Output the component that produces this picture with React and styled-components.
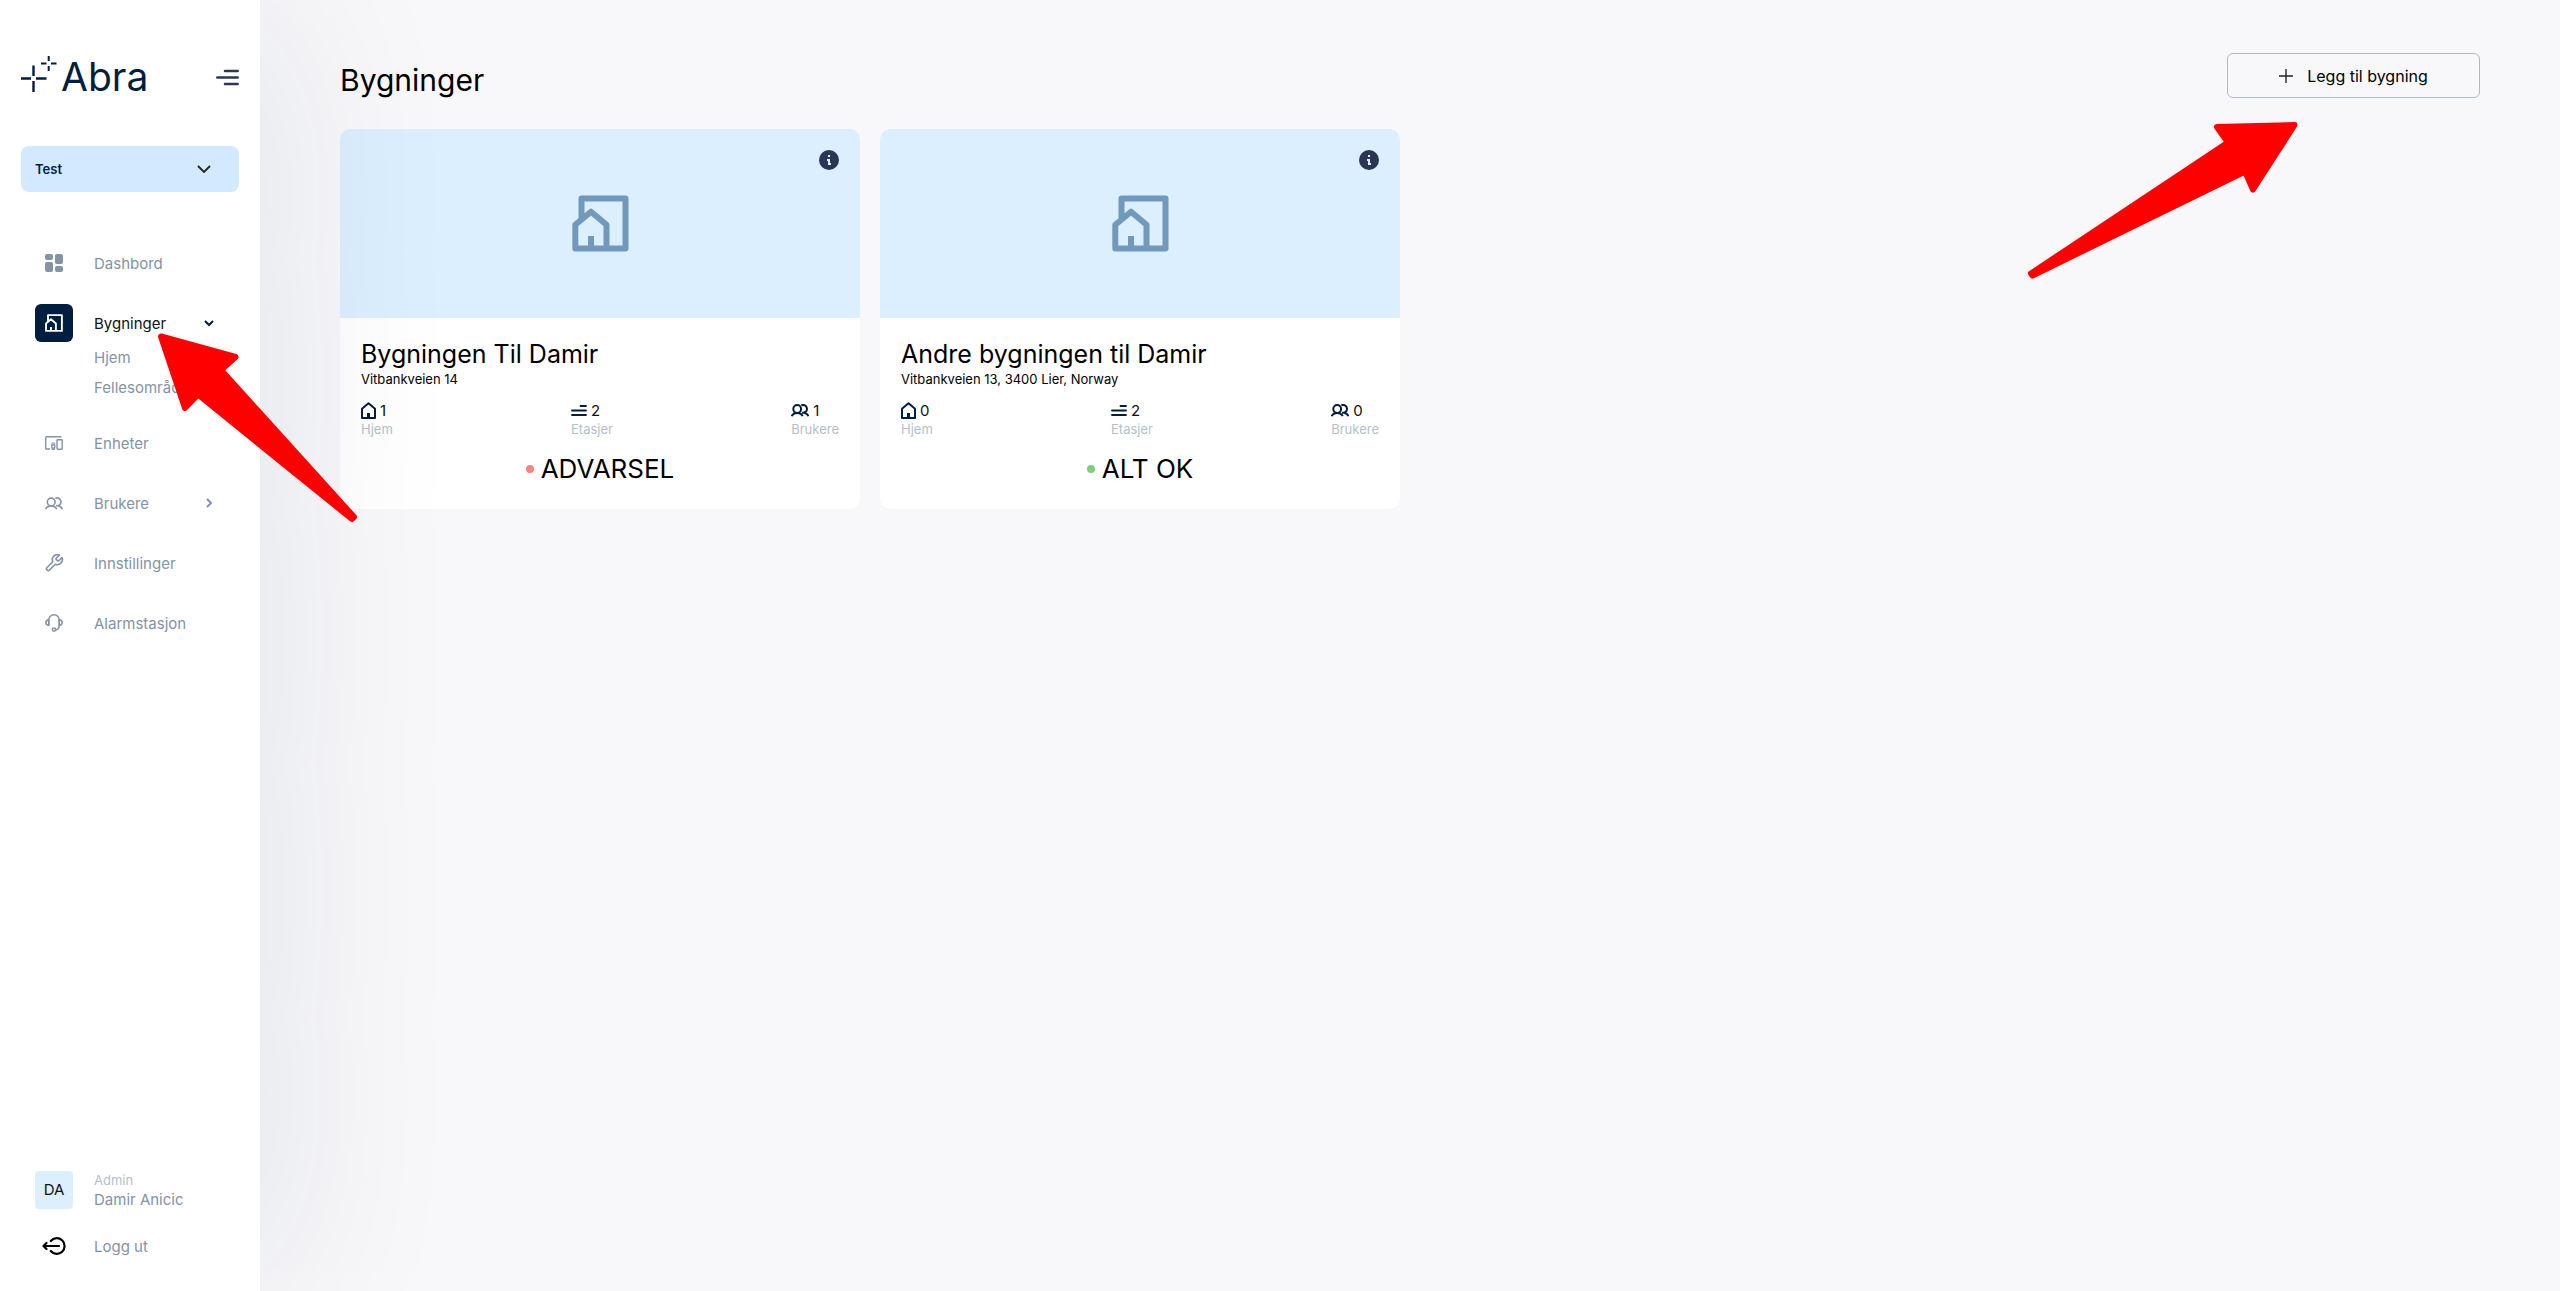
import React from 'react'
import styled, { createGlobalStyle } from 'styled-components'

const GlobalStyle = createGlobalStyle`
	* {
		box-sizing: border-box;
		margin: 0;
		padding: 0;
	}
	body {
		font-family: Inter, 'Liberation Sans', sans-serif;
		background-color: #f8f8fb;
		color: #000;
	}
	ul {
		list-style: none;
	}
	a {
		color: inherit;
		text-decoration: none;
	}
	button,
	select {
		font-family: inherit;
		cursor: pointer;
	}
	svg {
		display: block;
		flex-shrink: 0;
	}
`

const Page = styled.div`
	position: relative;
	display: flex;
	min-height: 100vh;
	overflow: hidden;
`

const Sidebar = styled.aside`
	position: relative;
	z-index: 1;
	display: flex;
	flex-direction: column;
	width: 260px;
	flex-shrink: 0;
	padding: 53px 21px 25px;
	background-color: white;
	box-shadow: 0 4px 200px rgba(0, 30, 40, 0.12);
`

const LogoRow = styled.div`
	display: flex;
	justify-content: space-between;
	align-items: center;
	height: 48px;
	margin-bottom: 45px;
`

const Logo = styled.a`
	display: flex;
	align-items: center;
	gap: 4px;
	color: #001e40;
	font-size: 39px;
	line-height: 48px;
`

const MenuButton = styled.button`
	border: none;
	background: none;
	color: #2c3659;
`

const CustomerPicker = styled.label`
	display: grid;
	align-items: center;
	margin-bottom: 51px;
	svg {
		grid-area: 1 / 1;
		justify-self: end;
		margin-right: 28px;
		pointer-events: none;
	}
`

const CustomerSelect = styled.select`
	grid-area: 1 / 1;
	appearance: none;
	width: 100%;
	height: 46px;
	padding: 0 14px;
	border: none;
	border-radius: 8px;
	background-color: #d2e9ff;
	color: #001e40;
	font-size: 13px;
	font-weight: 600;
`

const Nav = styled.nav`
	display: flex;
	flex-direction: column;
	flex: 1;
	gap: 20px;
	padding: 0 14px;
`

const NavItem = styled.a`
	display: flex;
	align-items: center;
	gap: 21px;
	height: 40px;
	font-size: 15px;
	color: ${({ $active }) => ($active ? '#111' : '#8493a5')};
	span {
		flex: 1;
	}
	> svg {
		margin-right: 11px;
	}
`

const IconBox = styled.div`
	display: flex;
	align-items: center;
	justify-content: center;
	width: 38px;
	height: 38px;
	border-radius: 6px;
	background-color: ${({ $active }) => ($active ? '#001e40' : 'transparent')};
	color: ${({ $active }) => ($active ? 'white' : 'inherit')};
`

const SubNav = styled.ul`
	padding-left: 59px;
	font-size: 15px;
	line-height: 30px;
	color: #8493a5;
`

const UserArea = styled.div`
	display: flex;
	flex-direction: column;
	gap: 16px;
	padding: 0 14px;
`

const User = styled.div`
	display: flex;
	align-items: center;
	gap: 21px;
	color: #8493a5;
	font-size: 15px;
	line-height: 20px;
`

const Avatar = styled.div`
	display: flex;
	align-items: center;
	justify-content: center;
	width: 38px;
	height: 38px;
	border-radius: 4px;
	background-color: #dbefff;
	color: #111;
`

const Role = styled.p`
	color: #b5bfca;
	font-size: 13px;
`

const Main = styled.main`
	flex: 1;
	padding: 53px 80px;
`

const Header = styled.header`
	display: flex;
	align-items: flex-end;
	justify-content: space-between;
	margin-bottom: 31px;
`

const Title = styled.h1`
	font-size: 30px;
	font-weight: 400;
	line-height: 36px;
`

const AddButton = styled.button`
	display: flex;
	align-items: center;
	justify-content: center;
	gap: 14px;
	width: 253px;
	height: 45px;
	border: 1px solid #adb8c9;
	border-radius: 6px;
	background-color: transparent;
	color: black;
	font-size: 16px;
`

const Cards = styled.div`
	display: grid;
	grid-template-columns: repeat(4, 1fr);
	gap: 20px;
`

const Card = styled.article`
	overflow: hidden;
	border-radius: 10px;
	background-color: white;
`

const CardCover = styled.div`
	position: relative;
	display: flex;
	align-items: center;
	justify-content: center;
	height: 189px;
	background-color: #dbefff;
	color: #7199bb;
`

const InfoButton = styled.button`
	position: absolute;
	top: 21px;
	right: 21px;
	border: none;
	background: none;
`

const CardBody = styled.div`
	padding: 21px 21px 25px;
`

const CardTitle = styled.h2`
	font-size: 25px;
	font-weight: 400;
	line-height: 31px;
`

const Address = styled.p`
	font-size: 13px;
	line-height: 18px;
`

const Stats = styled.div`
	display: flex;
	justify-content: space-between;
	margin: 12px 0 16px;
`

const StatValue = styled.div`
	display: flex;
	align-items: center;
	gap: 4px;
	height: 20px;
	color: #001e40;
	font-size: 15px;
	span {
		color: #111;
	}
`

const StatLabel = styled.p`
	color: #b5bfca;
	font-size: 13px;
	line-height: 18px;
`

const Status = styled.div`
	display: flex;
	align-items: center;
	justify-content: center;
	gap: 7px;
	font-size: 26px;
	line-height: 30px;
	&::before {
		content: '';
		width: 8px;
		height: 8px;
		border-radius: 50%;
		background-color: ${({ $ok }) => ($ok ? '#7ad37a' : '#ff827d')};
	}
`

// red pointers lie over the page
const Pointer = styled.svg`
	position: absolute;
	z-index: 2;
	pointer-events: none;
	fill: #ff0000;
	stroke: #ff0000;
	stroke-width: 6px;
	stroke-linejoin: round;
`

const MenuPointer = styled(Pointer)`
	top: 325px;
	left: 150px;
`

const AddPointer = styled(Pointer)`
	top: 115px;
	right: 250px;
`

function LogoMark() {
	return (
		<svg width='36' height='42' viewBox='0 0 36 42' fill='none' stroke='currentColor' strokeWidth='2.4'>
			<path d='M0 22.500h10M15 22.500h10.500M12.500 9.500v10.500M12.500 25v11' />
			<path d='M20 7.500h5.500M30 7.500h5.500M27.700 0v5M27.700 10v5' strokeWidth='2' />
		</svg>
	)
}

function MenuIcon() {
	return (
		<svg width='23' height='17' viewBox='0 0 23 17' fill='none' stroke='currentColor' strokeWidth='2.500' strokeLinecap='round'>
			<path d='M9 2h12.700M1.300 8.500h20.400M9 15h12.700' />
		</svg>
	)
}

function Chevron({ right, color = 'currentColor' }) {
	return (
		<svg width='10' height='10' viewBox='0 0 10 10' fill='none' stroke={color} strokeWidth='2'>
			<path d={right ? 'M3 1l4 4-4 4' : 'M1 3l4 4 4-4'} />
		</svg>
	)
}

function DashboardIcon() {
	return (
		<svg width='18' height='18' viewBox='0 0 18 18' fill='currentColor'>
			<rect width='8' height='6' rx='2' />
			<rect y='8' width='8' height='10' rx='2' />
			<rect x='10' width='8' height='10' rx='2' />
			<rect x='10' y='12' width='8' height='6' rx='2' />
		</svg>
	)
}

function BuildingIcon({ size }) {
	return (
		<svg width={size} height={size} viewBox='0 0 57 57' fill='none' stroke='currentColor' strokeWidth='6' strokeLinejoin='round'>
			<path d='M9.500 24V3.500h44v50H3.300V29.800L19 16.700l15.500 13.100v23.700M19 41v12' />
		</svg>
	)
}

function DevicesIcon() {
	return (
		<svg width='18' height='14' viewBox='0 0 18 14' fill='none' stroke='currentColor' strokeWidth='1.400'>
			<path d='M16.500 .8H1.500q-.8 0-.8 .8v10.600q0 .8.8.8H5' />
			<rect x='12' y='3.700' width='5.200' height='9.500' rx='.6' />
			<circle cx='8.300' cy='10.500' r='1.700' />
			<path d='M7 8.800V7h2.600v1.800M7 12v1.500h2.600V12' strokeWidth='1' />
		</svg>
	)
}

function UsersIcon({ bold }) {
	return (
		<svg width='18' height='13' viewBox='0 0 18 13' fill='none' stroke='currentColor' strokeWidth={bold ? 2 : 1.6}>
			<circle cx='6.200' cy='5' r='3.900' />
			<path d='M.7 12.200C1.700 9.800 3.500 8.900 6.200 8.900s4.500.9 5.500 3.300' />
			<path d='M10.300 1.400A3.900 3.900 0 1 1 11 8.600M13.500 8.900c2 .3 3.200 1.500 3.900 3.300' />
		</svg>
	)
}

function WrenchIcon() {
	return (
		<svg width='20' height='20' viewBox='0 0 24 24' fill='none' stroke='currentColor' strokeWidth='2' strokeLinejoin='round'>
			<path d='M14.700 6.300a1 1 0 0 0 0 1.400l1.600 1.600a1 1 0 0 0 1.400 0l3.770-3.770a6 6 0 0 1-7.940 7.940l-6.910 6.910a2.120 2.120 0 0 1-3-3l6.910-6.910a6 6 0 0 1 7.940-7.940l-3.760 3.760z' />
		</svg>
	)
}

function HeadsetIcon() {
	return (
		<svg width='18' height='18' viewBox='0 0 18 18' fill='none' stroke='currentColor' strokeWidth='1.500' strokeLinejoin='round'>
			<path d='M3.800 11.500V6a5.200 5.200 0 0 1 10.400 0v5.500' />
			<path d='M3.800 5.700C1.700 5.900.8 7.100.8 8.600s.9 2.700 3 2.900zM14.200 5.700c2.100.2 3 1.400 3 2.900s-.9 2.700-3 2.900z' />
			<path d='M14.200 11.500c0 2.400-1.200 3.900-3.200 4.400' />
			<circle cx='9' cy='15.600' r='1.600' />
		</svg>
	)
}

function LogoutIcon() {
	return (
		<svg width='24' height='18' viewBox='0 0 24 18' fill='none' stroke='#000' strokeWidth='2.200' strokeLinecap='round' strokeLinejoin='round'>
			<path d='M8.800 4A7.800 7.800 0 1 1 8.800 14M1.500 9H17M4.500 6l-3 3 3 3' />
		</svg>
	)
}

function HomeIcon() {
	return (
		<svg width='15' height='17' viewBox='0 0 15 17' fill='none' stroke='currentColor' strokeWidth='2' strokeLinejoin='round'>
			<path d='M1 16V6.700L7.500 1.200 14 6.700V16z' />
			<path d='M6 11h3v5H6z' fill='currentColor' stroke='none' />
		</svg>
	)
}

function FloorsIcon() {
	return (
		<svg width='16' height='11' viewBox='0 0 16 11' fill='none' stroke='currentColor' strokeWidth='1.800' strokeLinecap='round'>
			<path d='M9.500 1H15M1 5.500h14M1 10h14' />
		</svg>
	)
}

function InfoIcon() {
	return (
		<svg width='20' height='20' viewBox='0 0 20 20'>
			<circle cx='10' cy='10' r='10' fill='#2b3556' />
			<path d='M9 5h2v2H9zM8 9h3v4h1v2H9v-4H8z' fill='#dbefff' />
		</svg>
	)
}

function PlusIcon() {
	return (
		<svg width='14' height='14' viewBox='0 0 14 14' fill='none' stroke='#222' strokeWidth='1.400'>
			<path d='M7 0v14M0 7h14' />
		</svg>
	)
}

const buildings = [
	{ name: 'Bygningen Til Damir', address: 'Vitbankveien 14', homes: 1, floors: 2, users: 1, ok: false },
	{ name: 'Andre bygningen til Damir', address: 'Vitbankveien 13, 3400 Lier, Norway', homes: 0, floors: 2, users: 0, ok: true },
]

function Stat({ icon, value, label }) {
	return (
		<div>
			<StatValue>
				{icon}
				<span>{value}</span>
			</StatValue>
			<StatLabel>{label}</StatLabel>
		</div>
	)
}

function BuildingCard({ building }) {
	return (
		<Card>
			<CardCover>
				<BuildingIcon size={57} />
				<InfoButton aria-label='Info'>
					<InfoIcon />
				</InfoButton>
			</CardCover>
			<CardBody>
				<CardTitle>{building.name}</CardTitle>
				<Address>{building.address}</Address>
				<Stats>
					<Stat icon={<HomeIcon />} value={building.homes} label='Hjem' />
					<Stat icon={<FloorsIcon />} value={building.floors} label='Etasjer' />
					<Stat icon={<UsersIcon bold />} value={building.users} label='Brukere' />
				</Stats>
				<Status $ok={building.ok}>{building.ok ? 'ALT OK' : 'ADVARSEL'}</Status>
			</CardBody>
		</Card>
	)
}

function App() {
	return (
		<Page>
			<GlobalStyle />
			<Sidebar>
				<LogoRow>
					<Logo href='#'>
						<LogoMark />
						Abra
					</Logo>
					<MenuButton aria-label='Meny'>
						<MenuIcon />
					</MenuButton>
				</LogoRow>
				<CustomerPicker>
					<CustomerSelect aria-label='Kunde' defaultValue='Test'>
						<option>Test</option>
					</CustomerSelect>
					<svg width='14' height='8' viewBox='0 0 14 8' fill='none' stroke='#222' strokeWidth='1.800'>
						<path d='M1 1l6 6 6-6' />
					</svg>
				</CustomerPicker>
				<Nav>
					<NavItem href='#'>
						<IconBox>
							<DashboardIcon />
						</IconBox>
						<span>Dashbord</span>
					</NavItem>
					<div>
						<NavItem href='#' $active>
							<IconBox $active>
								<BuildingIcon size={18} />
							</IconBox>
							<span>Bygninger</span>
							<Chevron color='#001e40' />
						</NavItem>
						<SubNav>
							<li>
								<a href='#'>Hjem</a>
							</li>
							<li>
								<a href='#'>Fellesområder</a>
							</li>
						</SubNav>
					</div>
					<NavItem href='#'>
						<IconBox>
							<DevicesIcon />
						</IconBox>
						<span>Enheter</span>
					</NavItem>
					<NavItem href='#'>
						<IconBox>
							<UsersIcon />
						</IconBox>
						<span>Brukere</span>
						<Chevron right />
					</NavItem>
					<NavItem href='#'>
						<IconBox>
							<WrenchIcon />
						</IconBox>
						<span>Innstillinger</span>
					</NavItem>
					<NavItem href='#'>
						<IconBox>
							<HeadsetIcon />
						</IconBox>
						<span>Alarmstasjon</span>
					</NavItem>
				</Nav>
				<UserArea>
					<User>
						<Avatar>DA</Avatar>
						<div>
							<Role>Admin</Role>
							<p>Damir Anicic</p>
						</div>
					</User>
					<NavItem href='#'>
						<IconBox>
							<LogoutIcon />
						</IconBox>
						<span>Logg ut</span>
					</NavItem>
				</UserArea>
			</Sidebar>
			<Main>
				<Header>
					<Title>Bygninger</Title>
					<AddButton>
						<PlusIcon />
						Legg til bygning
					</AddButton>
				</Header>
				<Cards>
					{buildings.map(building => (
						<BuildingCard key={building.name} building={building} />
					))}
				</Cards>
			</Main>
			<MenuPointer width='210' height='200' viewBox='150 325 210 200'>
				<path d='M161 336.500L235.500 357 221 370 354 517l-2 2L198 394.500 185 408z' />
			</MenuPointer>
			<AddPointer width='290' height='170' viewBox='2020 115 290 170'>
				<path d='M2294.500 125L2253 189.500 2245 171.500 2032.500 275.500 2031 273.500 2228 142.500 2217 127z' />
			</AddPointer>
		</Page>
	)
}

export default App
